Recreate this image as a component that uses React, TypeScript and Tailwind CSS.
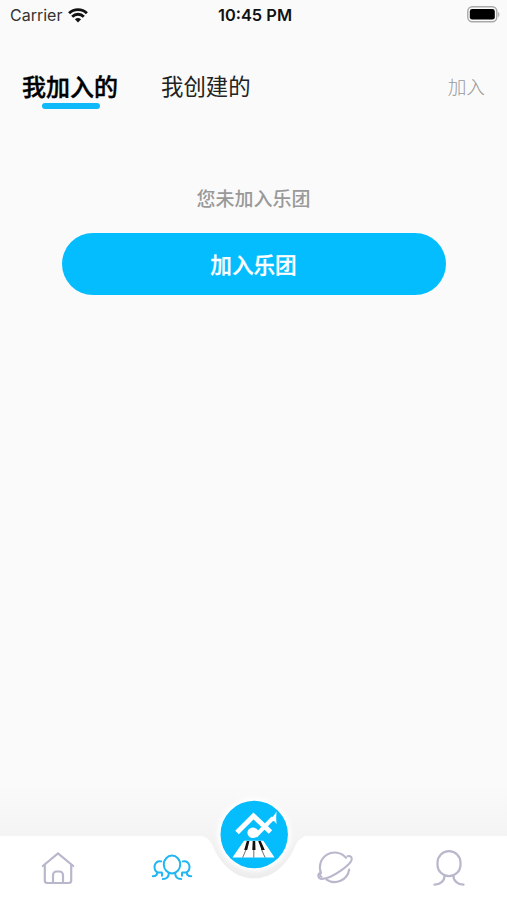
import React from 'react';

const WifiIcon = () => (
  <svg width="20" height="15" viewBox="0 0 20 15" fill="none" stroke="#111" strokeWidth="2.900">
    <path d="M1.100 5.200a12.800 12.800 0 0 1 17.800 0" />
    <path d="M4.200 8.700a8.200 8.200 0 0 1 11.600 0" />
    <path d="M6.900 11.300a4.600 4.600 0 0 1 6.200 0L10 14.500z" fill="#111" stroke="none" />
  </svg>
);

const BatteryIcon = () => (
  <svg width="33" height="17" viewBox="0 0 33 17">
    <rect x="0.8" y="0.8" width="29" height="15" rx="4.5" fill="#fafafa" stroke="#a9a9a9" strokeWidth="1.4" />
    <rect x="2.8" y="3" width="25" height="10.6" rx="2.4" fill="#000" />
    <path d="M31.2 6v5c1.6-.5 1.6-4.5 0-5z" fill="#a9a9a9" />
  </svg>
);

const HomeIcon = () => (
  <svg width="36" height="36" viewBox="0 0 36 36" fill="none" stroke="#b8b8cc" strokeWidth="2.200" strokeLinecap="round" strokeLinejoin="round">
    <path d="M2.800 16L18 3.300l15.200 12.700" />
    <path d="M4.800 15v15.500a2.500 2.500 0 0 0 2.500 2.500h21.400a2.500 2.500 0 0 0 2.500-2.500V15" />
    <path d="M13 33V25a3.500 3.500 0 0 1 3.500-3.500h3a3.500 3.500 0 0 1 3.500 3.500v8" />
  </svg>
);

const GroupIcon = () => (
  <svg width="42" height="28" viewBox="0 0 42 28" fill="none" stroke="#1fb6f3" strokeWidth="2" strokeLinecap="round">
    <ellipse cx="21" cy="10.500" rx="8.200" ry="8.900" />
    <path d="M17.800 19.300c0 3.600-2.500 5.700-6 5.700M24.200 19.300c0 3.600 2.500 5.700 6 5.700" />
    <path d="M10.200 7.400c-4-1-6.700 1.900-6.700 5.500 0 2.900 1.500 4.900 3.800 5.700h3.500M6.200 18.600c0 2.400-1.700 3.700-4.400 3.700M11 19v2.700" />
    <path d="M31.800 7.400c4-1 6.700 1.900 6.700 5.500 0 2.900-1.500 4.900-3.800 5.700h-3.500M35.800 18.600c0 2.400 1.700 3.700 4.400 3.700M31 19v2.700" />
  </svg>
);

const PlanetIcon = () => (
  <svg width="38" height="36" viewBox="0 0 38 36" fill="none" stroke="#b8b8cc" strokeWidth="2.100" strokeLinecap="round" strokeLinejoin="round">
    <path d="M5 23A14.800 14.800 0 0 1 30 7.800M33.200 19.500A14.800 14.800 0 0 1 10.500 29.600" />
    <path d="M31.500 6.200c3.200-.8 5.200 1.300 4 4.200-1.300 3-5.500 6.600-10.300 10-6.500 4.600-14.200 8.300-19.200 8.500-4.200.1-4.500-4.500-2.200-5.700" />
    <path d="M5 23c-1.500.6-1.300 3.300.5 3.800" />
  </svg>
);

const PersonIcon = () => (
  <svg width="34" height="38" viewBox="0 0 34 38" fill="none" stroke="#b8b8cc" strokeWidth="2.200" strokeLinecap="round">
    <rect x="5.500" y="2.200" width="23" height="25" rx="11.500" />
    <path d="M12.500 26.900c0 5-4.300 8.800-10 8.800M21.500 26.900c0 5 4.300 8.800 10 8.800" />
  </svg>
);

const CenterButton = () => (
  <svg width="108" height="110" viewBox="0 0 108 110">
    <defs>
      <linearGradient id="notch" x1="0" y1="0" x2="0" y2="1">
        <stop offset="0" stopColor="#f4f4f4" />
        <stop offset="1" stopColor="#ededed" />
      </linearGradient>
      <filter id="glow" x="-20%" y="-20%" width="140%" height="140%">
        <feGaussianBlur stdDeviation="2.200" />
      </filter>
    </defs>
    <path d="M0 45.500C6 46.500 10 50 12.500 55.500 19 72 34 88.500 54 88.500S89 72 95.500 55.500C98 50 102 46.500 108 45.500z" fill="url(#notch)" />
    <circle cx="54.200" cy="44.500" r="36.500" fill="#fff" filter="url(#glow)" />
    <circle cx="54.200" cy="44.500" r="33.700" fill="#05bcfc" />
    <path d="M37 42.500L53.500 26l17 16" fill="none" stroke="#fff" strokeWidth="5" />
    <ellipse cx="53" cy="42.800" rx="5.600" ry="5.200" fill="#fff" />
    <path d="M55.500 46L73 28" stroke="#fff" strokeWidth="4" />
    <path d="M69.500 28.800q4.500-2 7-7.500-.6 6.500 0 13-1.200-3-4-3.800z" fill="#fff" />
    <path d="M44 50.800h19.300L74.500 67.500H32.500z" fill="#fff" />
    <g stroke="#333" strokeWidth="0.700">
      <path d="M46.300 59L42.700 67.500M53.800 59v8.500M61.300 59l3.800 8.500" />
    </g>
    <path d="M46.800 51h2.600l-2.200 9h-3zM52.700 51h2.500l.3 9h-3.200zM58.200 51h2.600l4 9h-3.200z" fill="#111" />
  </svg>
);

export default function App() {
  return (
    <div className="flex h-[900px] w-[507px] flex-col overflow-hidden bg-[#fafafa] font-['Inter','Noto_Sans_CJK_SC',sans-serif] text-black">
      <header className="grid h-[30px] grid-cols-3 items-center pl-[10px] pr-[7px]">
        <div className="flex items-center gap-[6px]">
          <span className="text-[16px] text-[#333]">Carrier</span>
          <WifiIcon />
        </div>
        <span className="text-center text-[16.4px] font-semibold text-[#111]">10:45 PM</span>
        <div className="flex justify-end pb-[2px]">
          <BatteryIcon />
        </div>
      </header>

      <nav className="flex h-[80px] items-start pl-[22px] pr-[22px] pt-[39px]">
        <button className="flex flex-col items-center">
          <span className="text-[24px] leading-[37px] font-medium [-webkit-text-stroke:0.4px_#000]">我加入的</span>
          <span className="-mt-[3px] ml-px h-[6px] w-[58px] rounded-full bg-[#10b9fa]" />
        </button>
        <button className="ml-[43px] text-[22.4px] leading-[36px] text-[#222]">我创建的</button>
        <button className="ml-auto text-[18.7px] leading-[38px] font-light text-[#999]">加入</button>
      </nav>

      <main className="flex flex-1 flex-col items-center pt-[76px]">
        <p className="text-[19px] leading-[28px] font-medium text-[#999]">您未加入乐团</p>
        <button className="mt-[19px] h-[62px] w-[384px] rounded-full bg-[#03bdff] pt-[3px] text-[21.6px] font-medium text-white [-webkit-text-stroke:0.3px_#fff]">
          加入乐团
        </button>
      </main>

      <div className="h-[50px] bg-linear-to-b from-[#fafafa] to-[#f4f4f4]" />
      <footer className="relative flex h-[64px] justify-between bg-white px-px">
        <div className="grid w-[228px] grid-cols-2 place-items-center">
          <HomeIcon />
          <GroupIcon />
        </div>
        <div className="grid w-[228px] grid-cols-2 place-items-center">
          <PlanetIcon />
          <PersonIcon />
        </div>
        <div className="absolute bottom-0 left-[200px]">
          <CenterButton />
        </div>
      </footer>
    </div>
  );
}
